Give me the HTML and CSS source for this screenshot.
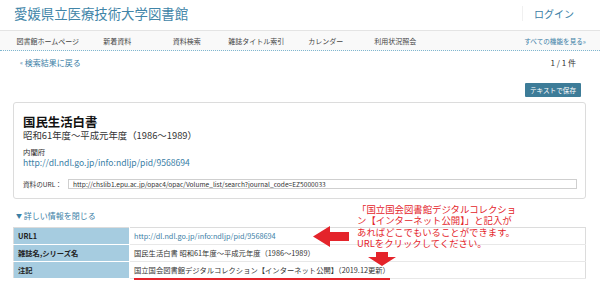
FILE: index.html
```html
<!DOCTYPE html>
<html lang="ja">
<head>
    <meta charset="utf-8">
    <link rel="stylesheet" href="styles.css">
</head>
<body>
<header class="site-head">
    <h1 class="site-title">愛媛県立医療技術大学図書館</h1>
    <a class="login" href="#">ログイン</a>
</header>
<nav class="gnav">
    <ul class="gnav-list">
        <li>図書館ホームページ</li>
        <li>新着資料</li>
        <li>資料検索</li>
        <li>雑誌タイトル索引</li>
        <li>カレンダー</li>
        <li>利用状況照会</li>
    </ul>
    <a class="gnav-all" href="#">すべての機能を見る»</a>
</nav>
<main class="main">
    <div class="result-bar">
        <a class="back" href="#"><span class="mark">«</span> 検索結果に戻る</a>
        <span class="count">1 / 1 件</span>
    </div>
    <div class="tools">
        <button class="btn-save">テキストで保存</button>
    </div>
    <section class="card">
        <h2 class="card-title">国民生活白書</h2>
        <p class="card-sub">昭和61年度～平成元年度（1986～1989）</p>
        <p class="card-pub">内閣府</p>
        <a class="card-link" href="#">http://dl.ndl.go.jp/info:ndljp/pid/9568694</a>
        <div class="url-row">
            <span class="url-label">資料のURL：</span>
            <input class="url-input" type="text" value="http://chslib1.epu.ac.jp/opac4/opac/Volume_list/search?journal_code=EZ5000033">
        </div>
    </section>
    <a class="toggle" href="#"><span class="mark">▼</span> 詳しい情報を閉じる</a>
    <table class="detail">
        <tr>
            <th>URL1</th>
            <td><a href="#">http://dl.ndl.go.jp/info:ndljp/pid/9568694</a></td>
        </tr>
        <tr>
            <th>雑誌名,シリーズ名</th>
            <td>国民生活白書 昭和61年度～平成元年度（1986～1989）</td>
        </tr>
        <tr>
            <th>注記</th>
            <td><span class="marked">国立国会図書館デジタルコレクション【インターネット公開】（2019.12更新）</span></td>
        </tr>
    </table>
</main>

<!-- annotation drawn over the page -->
<div class="note">「国立国会図書館デジタルコレクショ<br>ン【インターネット公開】」と記入が<br>あればどこでもいることができます。<br>URLをクリックしてください。</div>
<svg class="arrow-left" width="36" height="21" viewBox="0 0 36 21">
    <polygon points="0,10.5 17,0 17,6 36,6 36,15 17,15 17,21" fill="#e4242b"/>
</svg>
<svg class="arrow-down" width="28" height="14" viewBox="0 0 28 14">
    <polygon points="8,0 20,0 20,5 28,5 14,14 0,5 8,5" fill="#e4242b"/>
</svg>
</body>
</html>
```
FILE: styles.css
```css
html { font-family: "Noto Sans CJK JP", "DejaVu Sans", sans-serif; }
body {
    margin: 0;
    color: #333;
    background: #fff;
    position: relative;
    width: 600px;
    height: 292px;
    overflow: hidden;
}
a { color: #3b80a6; text-decoration: none; }
p { margin: 0; }

.site-head {
    height: 30px;
    display: flex;
    align-items: center;
    justify-content: space-between;
    padding: 0 26px 0 14px;
}
.site-title {
    margin: 0;
    font-size: 13.4px;
    font-weight: normal;
    color: #4185a8;
    line-height: 16px;
    margin-top: -4px;
}
.login {
    font-size: 10px;
    line-height: 15px;
    padding-left: 11px;
    border-left: 1px solid #f0f0f0;
    margin-top: -4px;
}

.gnav {
    height: 19px;
    border-top: 1px solid #e4e4e4;
    border-bottom: 1px dotted #7fb7d0;
    background: #f9f9f9;
    display: flex;
    align-items: center;
    padding-left: 13px;
}
.gnav-list {
    list-style: none;
    margin: 0;
    padding: 0;
    display: grid;
    grid-template-columns: repeat(6, 69.5px);
}
.gnav-list li {
    font-size: 7px;
    color: #444;
    text-align: center;
}
.gnav-all {
    margin-left: auto;
    margin-right: 14px;
    font-size: 6.6px;
}

.main { padding: 0 14px 0 13px; }

.result-bar {
    height: 22px;
    display: flex;
    align-items: center;
    justify-content: space-between;
    padding: 0 10px 0 7px;
}
.back { font-size: 8px; }
.mark { font-size: 6px; vertical-align: 1px; }
.count { font-size: 8px; color: #333; }

.tools {
    display: flex;
    justify-content: flex-end;
    margin-top: 10px;
    padding-right: 5px;
}
.btn-save {
    height: 14px;
    width: 56px;
    padding: 0;
    border: 0;
    border-radius: 1px;
    background: #3d7c98;
    color: #fff;
    font-family: inherit;
    font-size: 6.6px;
}

.card {
    margin-top: 5px;
    height: 97px;
    box-sizing: border-box;
    border: 1px solid #dcdcdc;
    border-radius: 3px;
    padding: 11px 9px 0 9px;
}
.card-title {
    margin: 0;
    font-size: 12.4px;
    line-height: 16px;
    color: #111;
}
.card-sub {
    font-size: 9.4px;
    line-height: 11px;
}
.card-pub {
    margin-top: 5px;
    font-size: 7.4px;
    line-height: 11px;
}
.card-link {
    display: block;
    font-size: 8.6px;
    line-height: 10px;
}
.url-row {
    display: flex;
    align-items: center;
    margin-top: 12px;
}
.url-label {
    font-size: 6.6px;
    width: 45px;
}
.url-input {
    flex: 1;
    margin-right: -1px;
    height: 10px;
    box-sizing: border-box;
    border: 1px solid #cfcfcf;
    padding: 0 4px;
    font-family: inherit;
    font-size: 6.6px;
    color: #333;
}

.toggle {
    display: block;
    margin-top: 9px;
    font-size: 8px;
    line-height: 16px;
    padding-left: 3px;
}

.detail {
    margin-top: 3px;
    width: 100%;
    border-collapse: collapse;
    border: 1px solid #dcdcdc;
    font-size: 7.3px;
}
.detail th, .detail td {
    height: 16px;
    padding: 0 4px;
    text-align: left;
    border-bottom: 1px solid #e8e8e8;
}
.detail th {
    width: 107px;
    background: #a6cce0;
    border-right: 1px solid #fff;
    border-bottom-color: #fff;
    color: #222;
}
.marked {
    padding-bottom: 3px;
    border-bottom: 2px solid #e4242b;
}

.note {
    position: absolute;
    left: 357px;
    top: 204px;
    font-size: 9.4px;
    line-height: 11.4px;
    color: #e4242b;
    white-space: nowrap;
}
.arrow-left {
    position: absolute;
    left: 313px;
    top: 226px;
}
.arrow-down {
    position: absolute;
    left: 368px;
    top: 252px;
}
```
